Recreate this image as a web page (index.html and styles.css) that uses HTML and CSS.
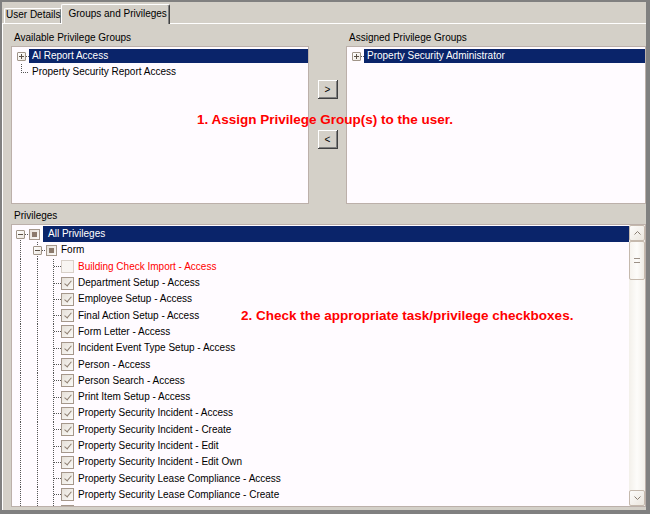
FILE: index.html
```html
<!DOCTYPE html>
<html lang="en">
<head>
    <meta charset="UTF-8">
    <title>Groups and Privileges</title>
    <link rel="stylesheet" href="styles.css">
</head>
<body>
    <div class="window">
        <div class="tabs">
            <div class="tab">User Details</div>
            <div class="tab active">Groups and Privileges</div>
        </div>
        <div class="panel">
            <div class="groups">
                <div class="group">
                    <div class="caption">Available Privilege Groups</div>
                    <div class="listbox">
                        <div class="row">
                            <span class="ind e"><span class="exp plus"></span></span>
                            <span class="lbl sel">Al Report Access</span>
                        </div>
                        <div class="row">
                            <span class="ind l"></span>
                            <span class="lbl">Property Security Report Access</span>
                        </div>
                    </div>
                </div>
                <div class="movers">
                    <button type="button">&gt;</button>
                    <button type="button">&lt;</button>
                </div>
                <div class="group">
                    <div class="caption">Assigned Privilege Groups</div>
                    <div class="listbox">
                        <div class="row">
                            <span class="ind e"><span class="exp plus"></span></span>
                            <span class="lbl sel">Property Security Administrator</span>
                        </div>
                    </div>
                </div>
            </div>

            <div class="caption">Privileges</div>
            <div class="treebox">
                <div class="tree">
                    <div class="row">
                        <span class="ind e down"><span class="exp minus"></span></span>
                        <span class="cb tri"></span>
                        <span class="lbl sel root">All Privileges</span>
                    </div>
                    <div class="row">
                        <span class="ind v"></span>
                        <span class="ind e through"><span class="exp minus"></span></span>
                        <span class="cb tri"></span>
                        <span class="lbl">Form</span>
                    </div>
                    <div class="row">
                        <span class="ind v"></span><span class="ind v"></span><span class="ind t"></span>
                        <span class="cb off"></span>
                        <span class="lbl red">Building Check Import - Access</span>
                    </div>
                    <div class="row">
                        <span class="ind v"></span><span class="ind v"></span><span class="ind t"></span>
                        <span class="cb on"></span>
                        <span class="lbl">Department Setup - Access</span>
                    </div>
                    <div class="row">
                        <span class="ind v"></span><span class="ind v"></span><span class="ind t"></span>
                        <span class="cb on"></span>
                        <span class="lbl">Employee Setup - Access</span>
                    </div>
                    <div class="row">
                        <span class="ind v"></span><span class="ind v"></span><span class="ind t"></span>
                        <span class="cb on"></span>
                        <span class="lbl">Final Action Setup - Access</span>
                    </div>
                    <div class="row">
                        <span class="ind v"></span><span class="ind v"></span><span class="ind t"></span>
                        <span class="cb on"></span>
                        <span class="lbl">Form Letter - Access</span>
                    </div>
                    <div class="row">
                        <span class="ind v"></span><span class="ind v"></span><span class="ind t"></span>
                        <span class="cb on"></span>
                        <span class="lbl">Incident Event Type Setup - Access</span>
                    </div>
                    <div class="row">
                        <span class="ind v"></span><span class="ind v"></span><span class="ind t"></span>
                        <span class="cb on"></span>
                        <span class="lbl">Person - Access</span>
                    </div>
                    <div class="row">
                        <span class="ind v"></span><span class="ind v"></span><span class="ind t"></span>
                        <span class="cb on"></span>
                        <span class="lbl">Person Search - Access</span>
                    </div>
                    <div class="row">
                        <span class="ind v"></span><span class="ind v"></span><span class="ind t"></span>
                        <span class="cb on"></span>
                        <span class="lbl">Print Item Setup - Access</span>
                    </div>
                    <div class="row">
                        <span class="ind v"></span><span class="ind v"></span><span class="ind t"></span>
                        <span class="cb on"></span>
                        <span class="lbl">Property Security Incident - Access</span>
                    </div>
                    <div class="row">
                        <span class="ind v"></span><span class="ind v"></span><span class="ind t"></span>
                        <span class="cb on"></span>
                        <span class="lbl">Property Security Incident - Create</span>
                    </div>
                    <div class="row">
                        <span class="ind v"></span><span class="ind v"></span><span class="ind t"></span>
                        <span class="cb on"></span>
                        <span class="lbl">Property Security Incident - Edit</span>
                    </div>
                    <div class="row">
                        <span class="ind v"></span><span class="ind v"></span><span class="ind t"></span>
                        <span class="cb on"></span>
                        <span class="lbl">Property Security Incident - Edit Own</span>
                    </div>
                    <div class="row">
                        <span class="ind v"></span><span class="ind v"></span><span class="ind t"></span>
                        <span class="cb on"></span>
                        <span class="lbl">Property Security Lease Compliance - Access</span>
                    </div>
                    <div class="row">
                        <span class="ind v"></span><span class="ind v"></span><span class="ind t"></span>
                        <span class="cb on"></span>
                        <span class="lbl">Property Security Lease Compliance - Create</span>
                    </div>
                    <div class="row">
                        <span class="ind v"></span><span class="ind v"></span><span class="ind t"></span>
                        <span class="cb on"></span>
                    </div>
                </div>
                <div class="scrollbar">
                    <div class="sb-btn">
                        <svg width="7" height="4" viewBox="0 0 7 4"><polyline points="0.5,3.5 3.5,0.5 6.5,3.5" fill="none" stroke="#8a7e72" stroke-width="1"/></svg>
                    </div>
                    <div class="sb-thumb"><span class="grip"></span></div>
                    <div class="sb-track"></div>
                    <div class="sb-btn">
                        <svg width="7" height="4" viewBox="0 0 7 4"><polyline points="0.5,0.5 3.5,3.5 6.5,0.5" fill="none" stroke="#8a7e72" stroke-width="1"/></svg>
                    </div>
                </div>
            </div>

            <p class="note note1">1. Assign Privilege Group(s) to the user.</p>
            <p class="note note2">2. Check the appropriate task/privilege checkboxes.</p>
        </div>
    </div>
</body>
</html>
```

FILE: styles.css
```css
:root {
    --face: #d4d0c8;
    --frame: #808080;
    --list-bg: #fffbff;
    --list-border: #bcb0aa;
    --select: #0a246a;
    --guide: #555555;
    --box-border: #a5978b;
    --note: #ff0000;
}

body {
    margin: 0;
    font-family: "Liberation Sans", Arial, sans-serif;
    font-size: 10px;
    color: #000;
}

.window {
    box-sizing: border-box;
    width: 650px;
    height: 514px;
    background: var(--face);
    border-style: solid;
    border-color: var(--frame);
    border-width: 2px 4px 4px 2px;
    display: flex;
    flex-direction: column;
}

/* tabs */
.tabs {
    height: 21px;
    display: flex;
    align-items: flex-end;
    padding-left: 2px;
}

.tab {
    box-sizing: border-box;
    height: 15px;
    line-height: 12px;
    padding: 0 1px 0 1px;
    border: 1px solid #fff;
    border-right-color: #404040;
    border-bottom: none;
    border-radius: 2px 2px 0 0;
    box-shadow: inset -1px 0 #808080;
    white-space: nowrap;
}

.tab.active {
    position: relative;
    z-index: 1;
    height: 20px;
    margin-left: -1px;
    margin-bottom: -1px;
    padding: 3px 2px 0 6px;
    background: var(--face);
}

.panel {
    position: relative;
    flex: 1;
    border-top: 1px solid #fff;
    border-left: 1px solid #fff;
    padding: 7px 0 0 8px;
}

.caption {
    line-height: 13px;
    padding-left: 3px;
    margin-bottom: 2px;
    white-space: nowrap;
}

.groups {
    display: grid;
    grid-template-columns: 298px 37px 1fr;
    margin-bottom: 5px;
}

.listbox {
    box-sizing: border-box;
    height: 158px;
    background: var(--list-bg);
    border: 1px solid var(--list-border);
    padding-top: 1px;
    overflow: hidden;
}

.movers {
    display: flex;
    flex-direction: column;
    align-items: center;
    gap: 31px;
    padding-top: 49px;
}

.movers button {
    box-sizing: border-box;
    width: 20px;
    height: 19px;
    padding: 0 0 1px;
    font-family: "Liberation Sans", Arial, sans-serif;
    font-size: 10px;
    color: #000;
    background: var(--face);
    border: none;
    box-shadow: inset -1px -1px #404040, inset 1px 1px #fff, inset -2px -2px #808080;
}

/* rows shared by lists and tree */
.row {
    display: flex;
    align-items: center;
    height: 16px;
    white-space: nowrap;
}

.lbl {
    line-height: 14px;
    padding: 0 3px;
}

.lbl.sel {
    flex: 1;
    background: var(--select);
    color: #fff;
}

.lbl.red {
    color: var(--note);
}

.ind {
    flex: none;
    align-self: stretch;
    box-sizing: border-box;
    width: 17px;
}

.ind.e {
    display: flex;
    align-items: center;
    padding-left: 5px;
    background: repeating-linear-gradient(to right, var(--guide) 0 1px, transparent 1px 2px) 100% 50% / 3px 1px no-repeat;
}

.ind.l {
    background:
        repeating-linear-gradient(to bottom, var(--guide) 0 1px, transparent 1px 2px) 9px 0 / 1px 50% no-repeat,
        repeating-linear-gradient(to right, var(--guide) 0 1px, transparent 1px 2px) 9px 50% / 8px 1px no-repeat;
}

.exp {
    box-sizing: border-box;
    position: relative;
    width: 9px;
    height: 9px;
    border: 1px solid #a09488;
    border-radius: 1px;
    background: linear-gradient(135deg, #fff 0%, #ece6df 100%);
}

.exp::before,
.plus::after {
    content: "";
    position: absolute;
    background: #5c5046;
}

.exp::before {
    left: 1px;
    top: 3px;
    width: 5px;
    height: 1px;
}

.plus::after {
    left: 3px;
    top: 1px;
    width: 1px;
    height: 5px;
}

/* privileges tree */
.treebox {
    box-sizing: border-box;
    height: 283px;
    display: flex;
    background: var(--list-bg);
    border: 1px solid var(--list-border);
    border-right: none;
}

.tree {
    flex: 1;
    padding-top: 1px;
    overflow: hidden;
}

.tree .row {
    height: 16.3px;
}

.tree .lbl {
    line-height: 16px;
    margin-left: 2px;
    padding: 0 2px;
}

.tree .lbl.root {
    margin-left: 3px;
    padding-left: 5px;
}

.tree .ind.e {
    padding-left: 4px;
    background-position: 100% 50%;
    background-size: 4px 1px;
}

.ind.v {
    background: repeating-linear-gradient(to bottom, var(--guide) 0 1px, transparent 1px 2px) 8px 0 / 1px 100% no-repeat;
}

.tree .ind.e.down {
    background:
        repeating-linear-gradient(to right, var(--guide) 0 1px, transparent 1px 2px) 100% 50% / 4px 1px no-repeat,
        repeating-linear-gradient(to bottom, var(--guide) 0 1px, transparent 1px 2px) 8px 100% / 1px 50% no-repeat;
}

.tree .ind.e.through {
    background:
        repeating-linear-gradient(to right, var(--guide) 0 1px, transparent 1px 2px) 100% 50% / 4px 1px no-repeat,
        repeating-linear-gradient(to bottom, var(--guide) 0 1px, transparent 1px 2px) 8px 0 / 1px 100% no-repeat;
}

.ind.t {
    width: 15px;
    background:
        repeating-linear-gradient(to bottom, var(--guide) 0 1px, transparent 1px 2px) 7px 0 / 1px 100% no-repeat,
        repeating-linear-gradient(to right, var(--guide) 0 1px, transparent 1px 2px) 8px 50% / 7px 1px no-repeat;
}

.cb {
    flex: none;
    position: relative;
    box-sizing: border-box;
    width: 13px;
    height: 13px;
    border: 1px solid var(--box-border);
    background: linear-gradient(135deg, #e6e0d8 0%, #fbfaf8 100%);
}

.cb.tri {
    width: 11px;
    height: 11px;
}

.cb.tri::after {
    content: "";
    position: absolute;
    left: 2px;
    top: 2px;
    width: 5px;
    height: 5px;
    background: #8c7a6c;
}

.cb.off {
    border-color: #d8d0c8;
    background: #f8f5f2;
}

.cb.on::after {
    content: "";
    position: absolute;
    left: 4px;
    top: 1px;
    width: 3px;
    height: 6px;
    border: solid #8e7f71;
    border-width: 0 1.5px 1.5px 0;
    transform: rotate(40deg);
}

/* scrollbar */
.scrollbar {
    flex: none;
    width: 16px;
    display: flex;
    flex-direction: column;
    background: linear-gradient(to right, #f3f0ea, #fdfcfa 50%, #f3f0ea);
    border-right: 1px solid var(--list-border);
}

.sb-btn {
    box-sizing: border-box;
    height: 16px;
    display: flex;
    align-items: center;
    justify-content: center;
    border: 1px solid #c5b9ad;
    border-radius: 2px;
    background: linear-gradient(135deg, #fdfcfb, #ebe6de);
}

.sb-thumb {
    box-sizing: border-box;
    height: 39px;
    display: flex;
    align-items: center;
    justify-content: center;
    border: 1px solid #c5b9ad;
    border-radius: 2px;
    background: linear-gradient(to right, #f6f3ee, #fdfcfa, #efebe4);
}

.grip {
    width: 6px;
    height: 3px;
    border-top: 1px solid #9c9086;
    border-bottom: 1px solid #9c9086;
}

.sb-track {
    flex: 1;
}

/* instruction overlays */
.note {
    position: absolute;
    margin: 0;
    font-size: 13.5px;
    font-weight: bold;
    line-height: 15px;
    color: var(--note);
    white-space: nowrap;
}

.note1 {
    left: 194px;
    top: 88px;
}

.note2 {
    left: 238px;
    top: 284px;
}
```
